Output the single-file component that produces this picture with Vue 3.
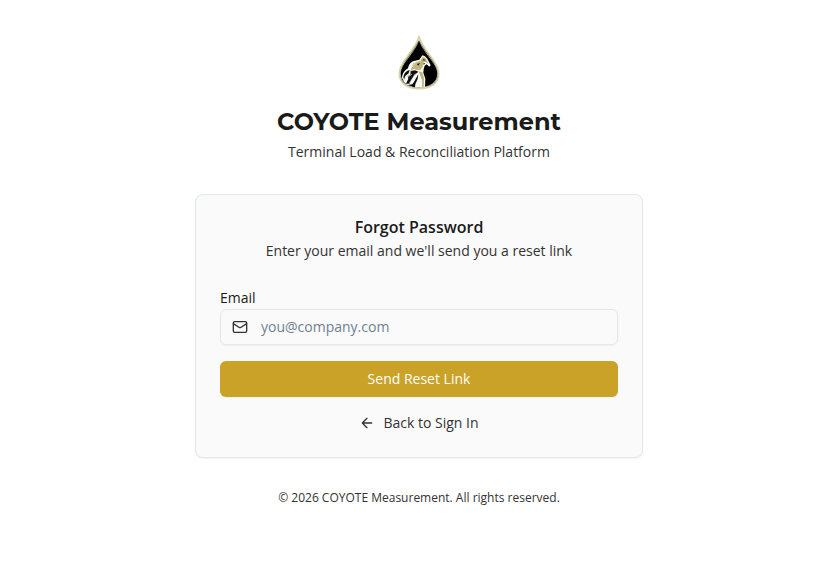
<script setup>
import { ref } from 'vue'

const email = ref('')
</script>

<template>
  <main class="page">
    <div class="content">
      <header class="brand">
        <svg class="logo" viewBox="0 0 168 168" role="img" aria-label="COYOTE Measurement">
          <path d="M84 6 C80 28 64 48 48 69 C36 85 25 100 25 119 C25 148 50 164 84 164 C118 164 143 148 143 119 C143 100 132 85 120 69 C104 48 88 28 84 6Z" fill="#000" stroke="#d8d2a6" stroke-width="5" />
          <path d="M84 14 C80 33 66 52 51 72 C39 88 28 102 28 119 C28 146 53 161 84 161 C115 161 140 146 140 119 C140 102 129 88 117 72 C102 52 88 33 84 14Z" fill="none" stroke="#f4f1dc" stroke-width="2" />
          <path d="M33 132 C34 116 42 108 51 103 C54 89 61 82 72 80 L85 77 L94 64 L102 67 L109 74 L119 94 L115 98 L107 91 L101 95 L98 106 L97 116 L103 134 L102 160 L67 160 L73 139 L64 151 L50 153 L40 145Z" fill="#fafaf5" />
          <path d="M62 98 L67 88 L76 84 L88 81 L95 68 L103 71 L109 82 L113 91 L105 84 L98 84 L95 98 L88 108 L78 108 L69 105 L59 110Z" fill="#c1b67a" />
          <path d="M83 112 L94 115 L99 132 L98 159 L93 160 L93 138 L88 125Z" fill="#c1b67a" />
          <path d="M37 128 C40 116 47 110 56 108 L53 118 L43 126 L39 137Z M59 111 L72 109 L82 113 L71 123 L61 139 L55 149 L45 149 L52 134 L50 127 L58 122Z M82 121 L80 135 L73 151 L72 160 L64 159 L72 138Z" fill="#111" />
          <path d="M95 75 L104 78 L98 80Z M78 90 L87 87 L82 95Z M96 89 L103 86 L99 92Z" fill="#111" />
          <path d="M59 103 L74 86 M42 136 L63 120 M56 147 L73 119" fill="none" stroke="#fafaf5" stroke-width="2" />
        </svg>
        <h1>COYOTE Measurement</h1>
        <p>Terminal Load &amp; Reconciliation Platform</p>
      </header>

      <section class="card">
        <h2>Forgot Password</h2>
        <p class="description">Enter your email and we'll send you a reset link</p>
        <form @submit.prevent>
          <label for="email">Email</label>
          <div class="field">
            <svg class="icon" viewBox="0 0 24 24" aria-hidden="true">
              <rect width="20" height="16" x="2" y="4" rx="2" />
              <path d="m22 7-8.97 5.7a1.94 1.94 0 0 1-2.06 0L2 7" />
            </svg>
            <input id="email" v-model="email" type="email" placeholder="you@company.com" autocomplete="email" />
          </div>
          <button type="submit">Send Reset Link</button>
        </form>
        <a class="back" href="#">
          <svg class="icon" viewBox="0 0 24 24" aria-hidden="true">
            <path d="m12 19-7-7 7-7M19 12H5" />
          </svg>
          Back to Sign In
        </a>
      </section>

      <footer>© 2026 COYOTE Measurement. All rights reserved.</footer>
    </div>
  </main>
</template>

<style>
body {
  margin: 0;
  background: #fff;
}
</style>

<style scoped>
.page,
.page * {
  box-sizing: border-box;
}

.page {
  display: flex;
  align-items: center;
  justify-content: center;
  min-height: 100vh;
  padding: 32px 16px 32px 36px;
  color: #1a1a1a;
  font: 14px/20px "Open Sans", "Noto Sans", sans-serif;
}

.content {
  width: 100%;
  max-width: 448px;
  padding-bottom: 34px;
}

.brand {
  display: flex;
  flex-direction: column;
  align-items: center;
  margin-bottom: 32px;
  text-align: center;
}

.logo {
  width: 56px;
  height: 56px;
  margin-bottom: 16px;
}

h1,
h2,
p {
  margin: 0;
}

h1 {
  font: 700 24px/32px Montserrat, Inter, sans-serif;
}

.brand p {
  margin-top: 4px;
  color: #333;
}

.card {
  padding: 24px;
  border: 1px solid #e2e8f0;
  border-radius: 8px;
  background: #fafafa;
  box-shadow: 0 1px 2px rgb(0 0 0 / 5%);
}

h2 {
  font-size: 16px;
  font-weight: 600;
  line-height: 16px;
  text-align: center;
}

.description {
  margin: 6px 0 26px;
  color: #333;
  text-align: center;
}

form {
  display: flex;
  flex-direction: column;
}

label {
  line-height: 22px;
}

.field {
  display: flex;
  align-items: center;
  gap: 13px;
  height: 36px;
  margin-bottom: 16px;
  padding: 0 11px;
  border: 1px solid #e2e8f0;
  border-radius: 6px;
  box-shadow: 0 1px 2px rgb(0 0 0 / 5%);
}

.field:focus-within {
  border-color: #c9a227;
}

.icon {
  flex: none;
  width: 16px;
  height: 16px;
  fill: none;
  stroke: #333;
  stroke-width: 2;
  stroke-linecap: round;
  stroke-linejoin: round;
}

input {
  flex: 1;
  min-width: 0;
  padding: 0;
  border: 0;
  outline: 0;
  background: transparent;
  color: inherit;
  font: inherit;
}

input::placeholder {
  color: #708090;
  opacity: 1;
}

button {
  height: 36px;
  padding: 0 16px;
  border: 0;
  border-radius: 6px;
  background: #c9a227;
  box-shadow: 0 1px 2px rgb(0 0 0 / 5%);
  color: #fff;
  font: inherit;
  font-weight: 500;
  cursor: pointer;
}

.back {
  display: flex;
  align-items: center;
  justify-content: center;
  gap: 8px;
  width: fit-content;
  margin: 16px auto 0;
  color: #333;
  text-decoration: none;
}

footer {
  margin-top: 32px;
  color: #333;
  font-size: 12px;
  line-height: 16px;
  text-align: center;
}
</style>
